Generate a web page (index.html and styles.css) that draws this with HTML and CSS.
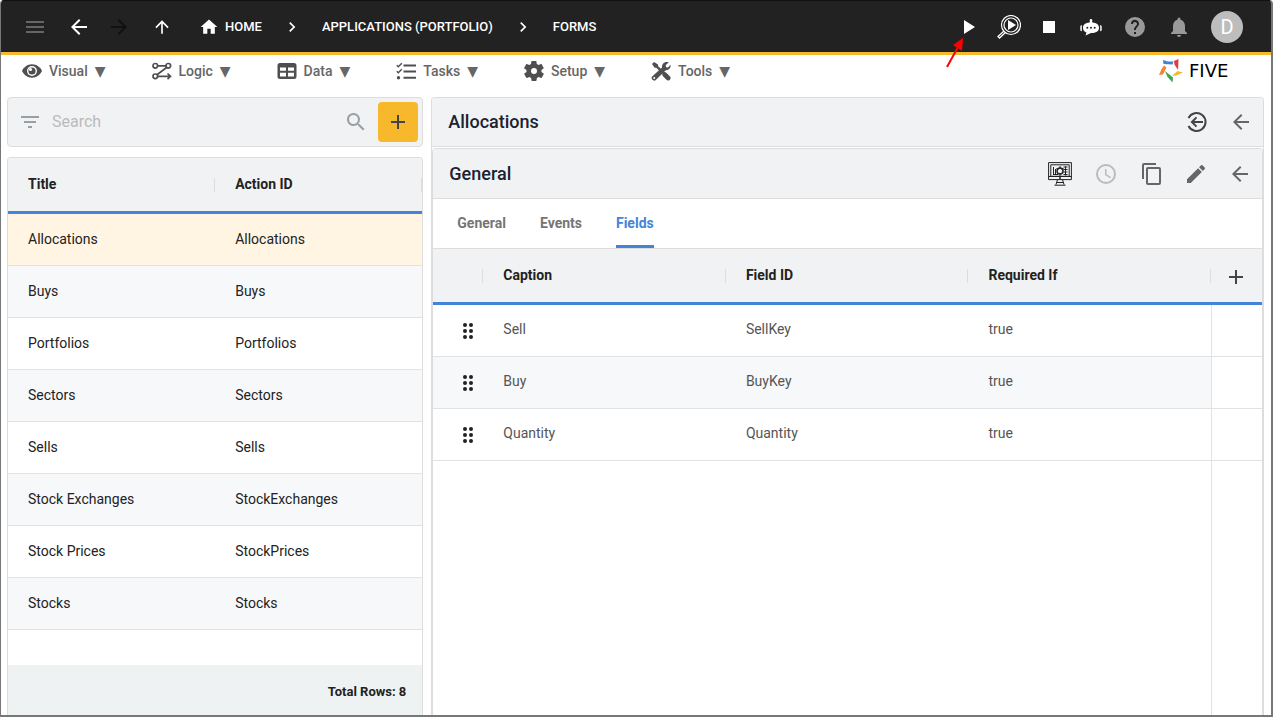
FILE: index.html
```html
<!DOCTYPE html>
<html lang="en">
<head>
<meta charset="utf-8">
<meta name="viewport" content="width=device-width, initial-scale=1">
<title>Five - Forms</title>
<link rel="stylesheet" href="styles.css">
</head>
<body>
<svg class="defs" aria-hidden="true">
  <symbol id="arrow" viewBox="0 0 24 24"><path d="M20 11H7.800l5.600-5.600L12 4l-8 8 8 8 1.400-1.400L7.800 13H20z"/></symbol>
  <symbol id="chevron" viewBox="0 0 24 24"><path d="M10 6 8.600 7.400l4.600 4.600-4.600 4.600L10 18l6-6z"/></symbol>
  <symbol id="plus" viewBox="0 0 24 24"><path d="M19 13h-6v6h-2v-6H5v-2h6V5h2v6h6z"/></symbol>
  <symbol id="drag" viewBox="0 0 24 24"><circle cx="9" cy="6" r="2"/><circle cx="15" cy="6" r="2"/><circle cx="9" cy="12" r="2"/><circle cx="15" cy="12" r="2"/><circle cx="9" cy="18" r="2"/><circle cx="15" cy="18" r="2"/></symbol>
</svg>
<div class="window">
  <header class="topbar">
    <nav class="nav" aria-label="Breadcrumb">
      <button class="icon-btn dim" aria-label="Menu"><svg class="icon" viewBox="0 0 24 24"><path d="M3 6h18v2H3zM3 11h18v2H3zM3 16h18v2H3z"/></svg></button>
      <button class="icon-btn back" aria-label="Back"><svg class="icon"><use href="#arrow"/></svg></button>
      <button class="icon-btn forward" aria-label="Forward" disabled><svg class="icon flip"><use href="#arrow"/></svg></button>
      <button class="icon-btn up" aria-label="Up"><svg class="icon small turn"><use href="#arrow"/></svg></button>
      <a class="crumb home" href="#"><svg class="icon small" viewBox="0 0 24 24"><path d="M10 20v-6h4v6h5v-8h3L12 3 2 12h3v8z"/></svg>HOME</a>
      <svg class="icon small sep"><use href="#chevron"/></svg>
      <a class="crumb" href="#">APPLICATIONS (PORTFOLIO)</a>
      <svg class="icon small sep"><use href="#chevron"/></svg>
      <a class="crumb" href="#">FORMS</a>
    </nav>
    <div class="actions">
      <button class="icon-btn" aria-label="Run"><svg class="icon" viewBox="0 0 24 24"><path d="M7 5v14l11-7z"/></svg></button>
      <button class="icon-btn" aria-label="Inspect"><svg class="icon" viewBox="0 0 24 24"><g fill="none" stroke="#fff"><circle cx="14" cy="10" r="9.500" stroke-width="1.200"/><circle cx="14" cy="10" r="7" stroke-width="1.200"/><path d="m7 16-6 5.500 1.500 1.500L8.500 17.500" stroke-width="1.300"/></g><path d="M11 5v10l8-5z"/></svg></button>
      <button class="icon-btn" aria-label="Stop"><svg class="icon" viewBox="0 0 24 24"><path d="M6 6h12v12H6z"/></svg></button>
      <button class="icon-btn robot" aria-label="Assistant"><svg class="icon" viewBox="0 0 24 24"><path d="M12 4a1.300 1.300 0 0 1 1 2.200l.5 1.300c4 .3 6.500 2 6.500 5.300 0 3.700-3 5.200-8 5.300L6.500 20.500 7.500 17.500C5.200 16.700 4 15.200 4 12.800c0-3.300 2.500-5 6.500-5.300l.5-1.300A1.300 1.300 0 0 1 12 4zM2.800 10v6.200a1.500 1.500 0 0 1-1.500-1.500v-3.200A1.500 1.500 0 0 1 2.800 10zM21.200 10a1.500 1.500 0 0 1 1.500 1.500v3.200a1.500 1.500 0 0 1-1.500 1.500z"/><g fill="#222"><circle cx="8.300" cy="12.700" r="1"/><circle cx="12" cy="12.700" r="1"/><circle cx="15.700" cy="12.700" r="1"/></g></svg></button>
      <button class="icon-btn muted" aria-label="Help"><svg class="icon" viewBox="0 0 24 24"><path d="M12 2a10 10 0 1 0 0 20 10 10 0 0 0 0-20zm1 17h-2v-2h2zm2.070-7.750-.9.920C13.450 12.900 13 13.500 13 15h-2v-.5c0-1.100.45-2.100 1.170-2.830l1.240-1.260A2 2 0 1 0 10 9H8a4 4 0 1 1 7.070 2.250z"/></svg></button>
      <button class="icon-btn muted" aria-label="Notifications"><svg class="icon" viewBox="0 0 24 24"><path d="M12 22a2 2 0 0 0 2-2h-4a2 2 0 0 0 2 2zm6-6v-5c0-3.070-1.640-5.640-4.500-6.320V4a1.500 1.500 0 0 0-3 0v.68C7.630 5.360 6 7.920 6 11v5l-2 2v1h16v-1z"/></svg></button>
      <button class="avatar" aria-label="Account">D</button>
    </div>
    <svg class="pointer" viewBox="0 0 22 34" aria-hidden="true"><path d="M3 31 14 11" stroke="#f00" stroke-width="2"/><path d="M19 2 18 15 9 9z" fill="#f00"/></svg>
  </header>
  <nav class="menubar" aria-label="Main">
    <button class="menu"><svg class="micon" viewBox="0 0 24 24"><path d="M12 4C6.500 4 2 7.500 0 12c2 4.500 6.500 8 12 8s10-3.500 12-8c-2-4.500-6.500-8-12-8z"/><circle cx="12" cy="12" r="6" fill="#fff"/><circle cx="12" cy="12" r="4.300"/><circle cx="10.300" cy="10.300" r="1.800" fill="#fff"/></svg>Visual<span class="caret">▼</span></button>
    <button class="menu"><svg class="micon" viewBox="0 0 20 20"><g fill="none" stroke="#4f4f4f" stroke-width="1.700"><circle cx="3.300" cy="4.800" r="2.300"/><circle cx="16.300" cy="4.800" r="2.300"/><circle cx="3.300" cy="15.300" r="2.300"/><path d="M5.600 4.800H14M14.600 6.500 5 13.700M5.600 15.300H18M15.500 12.500l3 2.800-3 2.800"/></g></svg>Logic<span class="caret">▼</span></button>
    <button class="menu"><svg class="micon" viewBox="0 0 20 20"><path fill-rule="evenodd" d="M3 2h14a2.500 2.500 0 0 1 2.500 2.500v11A2.500 2.500 0 0 1 17 18H3A2.500 2.500 0 0 1 .5 15.500v-11A2.500 2.500 0 0 1 3 2zm0 4.500v3.200h6V6.500zm8 0v3.200h6V6.500zm-8 5.200v3.800h6v-3.800zm8 0v3.800h6v-3.800z"/></svg>Data<span class="caret">▼</span></button>
    <button class="menu"><svg class="micon" viewBox="0 0 20 20"><path d="M7.500 3.500H20v2H7.500zM7.500 9.500H20v2H7.500zM7.500 15.700H20v2H7.500z"/><circle cx="2.500" cy="16.700" r="1.700"/><path d="m.8 4.300 1.500 1.500L5.800 2.300M.8 10.300l1.500 1.500 3.500-3.500" fill="none" stroke="#4f4f4f" stroke-width="1.500"/></svg>Tasks<span class="caret">▼</span></button>
    <button class="menu"><svg class="micon" viewBox="2 2 20 20"><path d="M19.400 13a7.500 7.500 0 0 0 0-2l2.100-1.600c.2-.2.3-.5.100-.7l-2-3.400c-.1-.2-.4-.3-.6-.2l-2.500 1a7 7 0 0 0-1.700-1l-.4-2.700c0-.2-.2-.4-.5-.4h-4c-.2 0-.4.200-.5.400L9 5.100c-.6.200-1.200.6-1.700 1l-2.500-1c-.2-.1-.5 0-.6.200l-2 3.400c-.1.200-.1.500.1.700L4.500 11a7.500 7.500 0 0 0 0 2l-2.100 1.600c-.2.200-.3.500-.1.700l2 3.400c.1.200.4.300.6.200l2.500-1c.5.400 1.100.8 1.700 1l.4 2.700c0 .2.200.4.500.4h4c.2 0 .4-.2.500-.4l.4-2.700c.6-.2 1.200-.6 1.700-1l2.500 1c.2.100.5 0 .6-.2l2-3.400c.1-.2.100-.5-.1-.7zM12 15a3 3 0 1 1 0-6 3 3 0 0 1 0 6z"/></svg>Setup<span class="caret">▼</span></button>
    <button class="menu"><svg class="micon" viewBox="0 0 20 20"><path d="m1 3 2-2 4 2.500v1.600l4 4-1.700 1.700-4-4H3.700zM12.300 11.500c1-.7 2-.6 3 .3l3.500 3.500a2.300 2.300 0 0 1-3.300 3.400L12 15.200c-.9-1-1-2-.3-3zM17.800 1.300 14.700 4.300l.4 1.900 1.900.4 2.500-2.900c.6 3-1.300 5.800-4.700 5.500L5 18.700A2.300 2.300 0 0 1 1.400 15.300L11 6.500c-.4-3.600 2.500-6.800 6.800-5.200zM3.200 16a1 1 0 1 0 .1 2 1 1 0 0 0-.1-2z"/></svg>Tools<span class="caret">▼</span></button>
    <a class="brand" href="#" aria-label="Five">
      <svg class="mark" viewBox="0 0 24 24"><path fill="#3e82dc" d="m4 1 5 1.500h5.500l-1 3L4.500 5z"/><path fill="#e23b3b" d="m19.500 0-4.500 2 .5 3.500 3.500 5.500z"/><path fill="#f7b92b" d="m24 13.500-5.500-1.500-5.500 5 4.500-.5z"/><path fill="#3fa752" d="m6 12 2.500 6 5 5.500.5-5z"/><path fill="#f58334" d="M5 6.500 2.500 10 0 16l4-.5 3.500-7z"/></svg>
      <span class="wordmark">FIVE</span>
    </a>
  </nav>
  <main class="content">
    <section class="list">
      <div class="search card">
        <svg class="icon gray" viewBox="0 0 24 24"><path d="M10 18h4v-2h-4zM3 6v2h18V6zm3 7h12v-2H6z"/></svg>
        <input class="search-input" type="search" placeholder="Search" aria-label="Search">
        <svg class="icon gray" viewBox="0 0 24 24"><path d="M15.500 14h-.8l-.3-.3a6.500 6.500 0 1 0-.7.700l.3.300v.8l5 5 1.500-1.500zm-6 0a4.500 4.500 0 1 1 0-9 4.500 4.500 0 0 1 0 9z"/></svg>
        <button class="add" aria-label="Add"><svg class="icon"><use href="#plus"/></svg></button>
      </div>
      <div class="forms card">
        <table class="grid">
          <thead><tr><th>Title</th><th>Action ID</th></tr></thead>
          <tbody>
            <tr class="selected"><td>Allocations</td><td>Allocations</td></tr>
            <tr><td>Buys</td><td>Buys</td></tr>
            <tr><td>Portfolios</td><td>Portfolios</td></tr>
            <tr><td>Sectors</td><td>Sectors</td></tr>
            <tr><td>Sells</td><td>Sells</td></tr>
            <tr><td>Stock Exchanges</td><td>StockExchanges</td></tr>
            <tr><td>Stock Prices</td><td>StockPrices</td></tr>
            <tr><td>Stocks</td><td>Stocks</td></tr>
          </tbody>
        </table>
        <div class="total">Total Rows: 8</div>
      </div>
    </section>
    <section class="detail card">
      <div class="bar">
        <h1 class="heading">Allocations</h1>
        <button class="icon-btn" aria-label="Exit"><svg class="icon" viewBox="0 0 24 24"><path d="M3.500 8a9 9 0 1 1 0 8" fill="none" stroke="#444" stroke-width="2"/><path d="M18 11H9.300l2.900-2.900-1.400-1.400L5.500 12l5.300 5.300 1.400-1.400L9.300 13H18z" fill="#444"/></svg></button>
        <button class="icon-btn" aria-label="Back to list"><svg class="icon"><use href="#arrow"/></svg></button>
      </div>
      <div class="panel">
        <div class="bar tools">
          <h2 class="heading">General</h2>
          <button class="icon-btn spaced" aria-label="Preview"><svg class="icon" viewBox="0 0 24 24"><g fill="none" stroke="#222"><path d="M.6.600h22.800v17H.6zM.6 14.500h22.800M2.800 2.800h18.400v11.500H2.800zM9.500 17.600l-1.500 5M14.500 17.600l1.500 5M6.500 23.200h11M8.500 20.500h7"/><path d="M5.500 5v8M7.500 7v6M5 12.500h5M17.500 4.500v9M15.500 5h4M15.500 7.500h4M15.500 10h4M15.500 12.500h4"/><circle cx="12" cy="9" r="3" stroke-width="1.500"/><path d="M12 4v3M12 11v3M8.500 6.500l2 1M13.500 7.500l2-1"/></g><circle cx="12" cy="16" r="1" fill="#222"/></svg></button>
          <button class="icon-btn spaced faint" aria-label="History" disabled><svg class="icon" viewBox="0 0 24 24"><path d="M12 2a10 10 0 1 0 0 20 10 10 0 0 0 0-20zm0 18a8 8 0 1 1 0-16 8 8 0 0 1 0 16zm.500-13H11v6l5.200 3.200.8-1.300-4.500-2.700z"/></svg></button>
          <button class="icon-btn" aria-label="Copy"><svg class="icon" viewBox="0 0 24 24"><path d="M16 1H4a2 2 0 0 0-2 2v14h2V3h12zm3 4H8a2 2 0 0 0-2 2v14c0 1.100.9 2 2 2h11a2 2 0 0 0 2-2V7a2 2 0 0 0-2-2zm0 16H8V7h11z"/></svg></button>
          <button class="icon-btn" aria-label="Edit"><svg class="icon" viewBox="0 0 24 24"><path d="M3 17.250V21h3.750L17.800 9.900l-3.700-3.700zM20.700 7a1 1 0 0 0 0-1.400l-2.300-2.300a1 1 0 0 0-1.400 0l-1.900 1.900L18.900 8.900z"/></svg></button>
          <button class="icon-btn" aria-label="Close"><svg class="icon"><use href="#arrow"/></svg></button>
        </div>
        <div class="tabs" role="tablist">
          <button class="tab" role="tab" aria-selected="false">General</button>
          <button class="tab" role="tab" aria-selected="false">Events</button>
          <button class="tab active" role="tab" aria-selected="true">Fields</button>
        </div>
        <table class="grid fields">
          <thead><tr><th class="lead"></th><th>Caption</th><th>Field ID</th><th>Required If</th><th class="tail"><button class="icon-btn" aria-label="Add field"><svg class="icon"><use href="#plus"/></svg></button></th></tr></thead>
          <tbody>
            <tr><td class="handle"><svg class="icon"><use href="#drag"/></svg></td><td>Sell</td><td>SellKey</td><td>true</td><td class="end"></td></tr>
            <tr><td class="handle"><svg class="icon"><use href="#drag"/></svg></td><td>Buy</td><td>BuyKey</td><td>true</td><td class="end"></td></tr>
            <tr><td class="handle"><svg class="icon"><use href="#drag"/></svg></td><td>Quantity</td><td>Quantity</td><td>true</td><td class="end"></td></tr>
          </tbody>
        </table>
        <div class="rest"><div class="rest-end"></div></div>
      </div>
    </section>
  </main>
</div>
</body>
</html>
```
FILE: styles.css
```css
* { box-sizing: border-box; }
body { margin: 0; font-family: Roboto, "Liberation Sans", sans-serif; font-size: 14px; color: #222; background: #fff; }
button { border: 0; padding: 0; background: none; font: inherit; color: inherit; }
a { color: inherit; text-decoration: none; }
.defs { display: none; }
.window { height: 100vh; display: flex; flex-direction: column; border: solid #777; border-width: 0 2px 2px 1px; border-radius: 4px 4px 0 0; overflow: hidden; }
.icon { display: block; width: 24px; height: 24px; fill: currentColor; flex: none; }
.small { width: 20px; height: 20px; }
.flip { transform: rotate(180deg); }
.turn { transform: rotate(90deg); }
.icon-btn { display: flex; align-items: center; justify-content: center; flex: none; }

.topbar { position: relative; flex: none; height: 55px; display: flex; align-items: center; justify-content: space-between; padding: 0 28px 0 22px; background: #222; color: #fff; border-top: 1px solid #111; border-bottom: 3px solid #f7b92b; }
.nav { display: flex; align-items: center; }
.dim { color: #666; }
.back { margin-left: 20px; }
.forward { margin-left: 16px; color: #111; }
.up { margin-left: 21px; }
.crumb { display: flex; align-items: center; gap: 6px; font-size: 13px; font-weight: 500; line-height: 22px; }
.home { margin-left: 27px; }
.sep { margin: 0 20px; }
.actions { display: flex; align-items: center; gap: 16px; }
.robot { margin-left: 2px; }
.muted { margin-left: 4px; color: #999; }
.avatar { width: 32px; height: 32px; margin-left: 4px; border-radius: 50%; background: #bdbdbd; color: #fff; font-size: 20px; line-height: 32px; }
.pointer { position: absolute; right: 305px; top: 35px; width: 22px; height: 34px; z-index: 1; }

.menubar { flex: none; display: flex; align-items: center; gap: 46px; height: 32px; padding: 0 22px 0 21px; }
.menu { display: flex; align-items: center; font-weight: 500; color: #666; }
.micon { width: 20px; height: 20px; margin-right: 7px; fill: #4f4f4f; }
.caret { margin-left: 7px; font-family: "DejaVu Sans", sans-serif; font-size: 14px; line-height: 16px; }
.brand { display: flex; align-items: center; gap: 6px; margin-left: auto; color: #000; }
.mark { width: 24px; height: 24px; }
.wordmark { width: 60px; font-family: "DejaVu Sans", sans-serif; font-size: 18px; line-height: 20px; }

.content { flex: 1; min-height: 0; display: grid; grid-template-columns: 1fr 2fr; gap: 8px; padding: 10px 7px 0 6px; }
.card { border: 1px solid #ddd; border-radius: 4px; }
.list { display: flex; flex-direction: column; gap: 10px; min-width: 0; }
.search { flex: none; display: flex; align-items: center; gap: 10px; height: 50px; padding: 0 4px 0 10px; background: #f1f2f4; }
.search-input { flex: 1; min-width: 0; border: 0; padding: 0; background: none; font: 16px/24px Roboto, sans-serif; color: #222; }
.search-input::placeholder { color: #bbb; }
.gray { color: #999fa3; }
.add { display: flex; align-items: center; justify-content: center; width: 40px; height: 40px; border-radius: 4px; background: #f7b92b; color: #444; }
.forms { flex: 1; min-height: 0; display: flex; flex-direction: column; border-bottom: 0; border-radius: 4px 4px 0 0; overflow: hidden; }
.total { margin-top: auto; padding: 19px 16px 15px; background: #eef2f3; font-size: 13px; font-weight: 700; line-height: 16px; text-align: right; }

.grid { width: 100%; table-layout: fixed; border-spacing: 0; }
.grid th { position: relative; height: 56px; padding: 0 0 1px 20px; border-bottom: 3px solid #4285d8; background: #f1f2f4; text-align: left; font-weight: 700; }
.grid th::after { content: ""; position: absolute; right: -1px; top: 20px; width: 2px; height: 14px; background: #ddd; }
.grid td { height: 52px; padding: 0 0 2px 20px; border-bottom: 1px solid #e2e2e2; }
.grid tbody tr:nth-child(even) { background: #f7f8fa; }
.grid .selected { background: #fff5e2; }

.detail { display: flex; flex-direction: column; min-width: 0; border-bottom: 0; border-radius: 4px 4px 0 0; }
.bar { flex: none; display: flex; align-items: center; gap: 20px; height: 49px; padding: 0 10px 0 16px; background: #f1f2f4; border-bottom: 1px solid #ddd; border-radius: 4px 4px 0 0; color: #666; }
.tools { height: 50px; }
.spaced { margin-right: 2px; }
.heading { flex: 1; margin: 0; font-size: 18px; font-weight: 500; line-height: 24px; color: #1b2230; }
.faint { color: #bbb; }
.panel { flex: 1; min-height: 0; margin-top: 1px; display: flex; flex-direction: column; border: 1px solid #ddd; border-bottom: 0; border-radius: 4px 4px 0 0; }
.tabs { flex: none; display: flex; gap: 34px; height: 50px; padding: 0 24px; border-bottom: 1px solid #ddd; }
.tab { padding-top: 2px; font-weight: 700; color: #757575; border-bottom: 3px solid transparent; }
.active { color: #4285d8; border-bottom-color: #4285d8; }
.fields td { padding-bottom: 4px; color: #555; }
.fields .lead { width: 50px; }
.fields .tail { width: 51px; padding: 2px 0 0 13px; color: #444; }
.fields .tail::after { display: none; }
.fields .handle { padding: 0 0 0 23px; color: #222; }
.fields .end { background: #fff; border-left: 1px solid #e2e2e2; }
.rest { flex: 1; display: flex; justify-content: flex-end; }
.rest-end { width: 51px; border-left: 1px solid #e2e2e2; }
```
